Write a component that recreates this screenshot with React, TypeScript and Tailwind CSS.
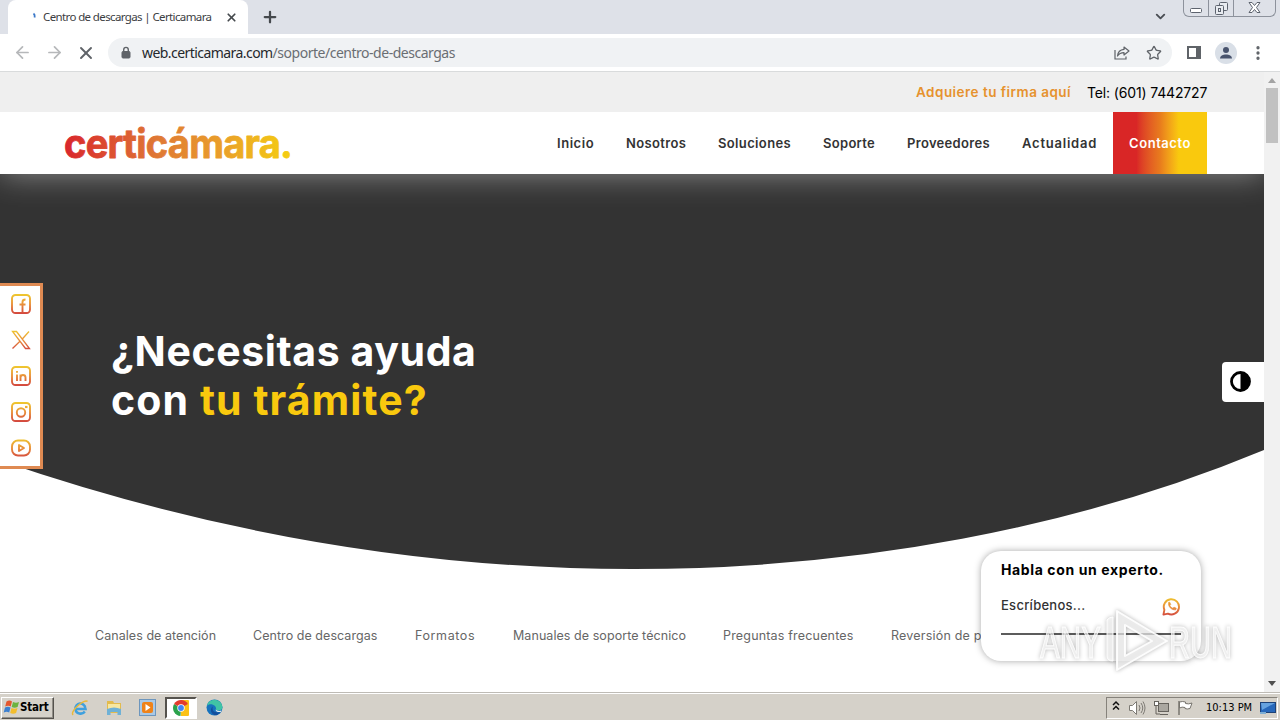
import type { ReactNode } from 'react';
import {
  ArrowLeft,
  ArrowRight,
  ChevronDown,
  EllipsisVertical,
  Plus,
  Star,
  X,
} from 'lucide-react';

const navItems = [
  { label: 'Inicio', className: 'w-[37px] tracking-[0.550px]' },
  { label: 'Nosotros', className: 'w-[60px] tracking-[0.350px]' },
  { label: 'Soluciones', className: 'w-[73px] tracking-[0.360px]' },
  { label: 'Soporte', className: 'w-[52px] tracking-[0.300px]' },
  { label: 'Proveedores', className: 'w-[83px] tracking-[0.320px]' },
  { label: 'Actualidad', className: 'w-[75px] tracking-[0.780px]' },
];

const sections = [
  { label: 'Canales de atención', className: 'w-[158px] tracking-[0.050px]' },
  { label: 'Centro de descargas', className: 'w-[162px] tracking-[0.050px]' },
  { label: 'Formatos', className: 'w-[98px] tracking-[0.600px]' },
  { label: 'Manuales de soporte técnico', className: 'w-[210px] tracking-[0.060px]' },
  { label: 'Preguntas frecuentes', className: 'w-[168px] tracking-[0.180px]' },
  { label: 'Reversión de pagos', className: 'w-[160px] tracking-[0.200px]' },
];

function WindowControls() {
  return (
    <div className="flex h-[17px] w-[93px] rounded-b-md border border-t-0 border-[#8d929c] text-[#5d636e]">
      <div className="flex w-[25px] items-center justify-center border-r border-[#8d929c]">
        <svg width="12" height="12" viewBox="0 0 12 12" fill="#fff" stroke="currentColor">
          <rect x="0.5" y="6.5" width="11" height="4" rx="1" />
        </svg>
      </div>
      <div className="flex w-[25px] items-center justify-center border-r border-[#8d929c]">
        <svg width="13" height="13" viewBox="0 0 13 13" fill="#e8ebf0" stroke="currentColor">
          <rect x="4.5" y="0.5" width="8" height="8" rx="1" />
          <rect x="0.5" y="3.5" width="8" height="9" rx="1" />
          <rect x="3.5" y="6.5" width="2" height="3" />
        </svg>
      </div>
      <div className="flex flex-1 items-center justify-center">
        <svg width="13" height="12" viewBox="0 0 13 12" fill="#fff" stroke="currentColor">
          <path d="M1 .5h3L6.500 3.500 9 .5h3L8.500 5.500l3.500 5H9L6.500 7.500 4 10.500H1l3.500-5z" />
        </svg>
      </div>
    </div>
  );
}

function TabStrip() {
  return (
    <div className="flex h-[34px] shrink-0 bg-[#dee1e8]">
      <div className="ml-2 flex h-full w-[240px] items-center rounded-t-lg bg-white pl-[23px]">
        <svg width="12" height="14" viewBox="0 0 12 14" fill="none" stroke="#3b78c8" strokeWidth="1.800">
          <path d="M2.500 3.500q1.500 1 1.200 4" />
        </svg>
        <span className="w-[184px] whitespace-nowrap text-[11.500px] tracking-[-0.620px] text-[#3c4043]">
          Centro de descargas | Certicamara
        </span>
        <X size={13} strokeWidth={3.200} className="-ml-0.5 text-[#45494d]" />
      </div>
      <Plus size={18} strokeWidth={3} className="mt-[8px] ml-[13px] text-[#45494d]" />
      <div className="flex-1" />
      <ChevronDown size={15} strokeWidth={3} className="mt-[9px] mr-[15px] text-[#4a4e54]" />
      <WindowControls />
      <div className="w-1" />
    </div>
  );
}

function ShareIcon() {
  return (
    <svg width="16" height="16" viewBox="0 0 16 16" fill="none" stroke="#5f6368" strokeWidth="1.200">
      <path d="M1 5v9h11v-2.500" />
      <path d="M10 2l5 4-5 4V7.700C7 7.700 5 8.700 3.500 11c.4-4 3-6.300 6.500-6.600z" strokeLinejoin="round" />
    </svg>
  );
}

function Toolbar() {
  return (
    <div className="flex h-[38px] shrink-0 items-center border-b border-[#d9dbdc] bg-white pl-[13px]">
      <ArrowLeft size={19} strokeWidth={2.200} className="text-[#b6b8ba]" />
      <ArrowRight size={19} strokeWidth={2.200} className="ml-[13px] text-[#b6b8ba]" />
      <X size={20} strokeWidth={2.300} className="ml-[12px] text-[#5f6368]" />
      <div className="ml-[12px] flex h-[29px] w-[1064px] items-center rounded-full bg-[#f0f2f4] pl-[11px]">
        <svg width="14" height="14" viewBox="0 0 14 14" fill="none" stroke="#5f6368">
          <rect x="3" y="5.500" width="8" height="6.500" rx="1" fill="#5f6368" />
          <path d="M4.700 5.500V3.700a2.300 2.300 0 0 1 4.600 0v1.800" strokeWidth="1.400" />
        </svg>
        <span className="ml-[9px] flex-1 whitespace-nowrap text-[14px] tracking-[-0.480px] text-[#6a6e73]">
          <span className="tracking-[-0.560px] text-[#25282c]">web.certicamara.com</span>
          /soporte/centro-de-descargas
        </span>
        <ShareIcon />
        <Star size={16} strokeWidth={1.900} className="mr-[10px] ml-[16px] text-[#5f6368]" />
      </div>
      <div className="ml-[15px] h-[13px] w-[14px] border-2 border-r-[5px] border-[#5f6368]" />
      <div className="ml-[14px] flex h-[22px] w-[22px] items-center justify-center rounded-full bg-[#d9dfe7]">
        <svg width="14" height="14" viewBox="0 0 14 14" fill="#48536d">
          <circle cx="7" cy="4" r="3" />
          <path d="M1 12.500c0-5.500 12-5.500 12 0z" />
        </svg>
      </div>
      <EllipsisVertical size={18} strokeWidth={2.400} className="ml-[12px] text-[#5f6368]" />
    </div>
  );
}

function Logo() {
  return (
    <svg width="230" height="50" viewBox="0 0 230 50" className="overflow-visible">
      <defs>
        <linearGradient id="logo" gradientUnits="userSpaceOnUse" x1="0" y1="0" x2="228" y2="0">
          <stop offset="0" stopColor="#d9262c" />
          <stop offset="0.400" stopColor="#df7735" />
          <stop offset="0.700" stopColor="#eaa02a" />
          <stop offset="1" stopColor="#f5cf10" />
        </linearGradient>
      </defs>
      <text
        x="0"
        y="39.500"
        textLength="228"
        lengthAdjust="spacingAndGlyphs"
        fill="url(#logo)"
        stroke="url(#logo)"
        strokeWidth="0.800"
        strokeLinejoin="round"
        className="font-['Inter',sans-serif] text-[40px] font-bold tracking-[-0.800px]"
      >
        certicámara.
      </text>
    </svg>
  );
}

function SiteHeader() {
  return (
    <header className="relative z-10 shrink-0 shadow-[0_0_30px_rgba(255,255,255,0.450)]">
      <div className="flex h-[40px] items-center justify-end bg-[#efefef] pr-[57px] text-[14px]">
        <span className="w-[171px] whitespace-nowrap text-[13.500px] font-semibold tracking-[0.470px] text-[#e6922e]">
          Adquiere tu firma aquí
        </span>
        <span className="w-[120px] whitespace-nowrap tracking-[-0.150px] text-black">Tel: (601) 7442727</span>
      </div>
      <div className="flex h-[62px] items-center bg-white pl-[64px]">
        <Logo />
        <nav className="ml-[263px] flex h-full items-center gap-8 text-[13px] font-semibold text-[#333]">
          {navItems.map((item) => (
            <a key={item.label} className={`${item.className} pt-0.5 whitespace-nowrap`}>
              {item.label}
            </a>
          ))}
          <a className="-ml-4 flex h-full w-[94px] items-center justify-center bg-linear-to-r from-[#d92626] from-25% via-[#e87b1d] via-50% to-[#f9c90e] to-70% pt-0.5 tracking-[0.550px] text-white">
            Contacto
          </a>
        </nav>
      </div>
    </header>
  );
}

function Hero() {
  return (
    <section className="relative h-[402px] shrink-0">
      <svg className="absolute inset-0" width="1264" height="402" viewBox="0 0 1264 402">
        <path d="M0 0H1264V276A1135 708 0 0 1 632 395Q316 395 0 286.500Z" fill="#333" />
      </svg>
      <h1 className="relative pt-[153px] pl-[111px] text-[41px] leading-[49px] font-bold tracking-[0.600px] text-white">
        ¿Necesitas ayuda
        <br />
        <span className="tracking-[1.100px]">
          con <span className="text-[#f9c90e]">tu trámite?</span>
        </span>
      </h1>
    </section>
  );
}

function SocialIcon({ children }: { children: ReactNode }) {
  return (
    <svg width="20" height="20" viewBox="0 0 20 20" fill="none" stroke="url(#social)" strokeWidth="1.900">
      {children}
    </svg>
  );
}

function SocialBar() {
  return (
    <div className="absolute top-[211px] left-0 flex h-[186px] w-[43px] flex-col items-center gap-4 border-3 border-l-0 border-[#df8a52] bg-white pt-[8px] pl-px">
      <svg width="0" height="0" className="absolute">
        <linearGradient id="social" gradientUnits="userSpaceOnUse" x1="0" y1="0" x2="0" y2="20">
          <stop offset="0" stopColor="#efc92f" />
          <stop offset="0.500" stopColor="#e9913a" />
          <stop offset="1" stopColor="#d2453f" />
        </linearGradient>
      </svg>
      <SocialIcon>
        <rect x="1" y="1" width="18" height="18" rx="3.500" />
        <path d="M11.500 19V8q0-2.500 3-2.500M8.500 10.500H14.500" />
      </SocialIcon>
      <SocialIcon>
        <path d="M1.500 1.500h4L18.500 18.500h-4zM18 1.500L11.300 9M8.700 11.500L1.500 18.500" strokeWidth="1.300" />
      </SocialIcon>
      <SocialIcon>
        <rect x="1" y="1" width="18" height="18" rx="3.500" />
        <path d="M6 8.500V15M6 5v1.800M9.500 15V8.500M9.500 11.500q0-2.500 2.500-2.500t2.500 2.500V15" />
      </SocialIcon>
      <SocialIcon>
        <rect x="1" y="1" width="18" height="18" rx="3.500" />
        <circle cx="10" cy="10.500" r="4.200" />
        <path d="M14 5h2.500" strokeWidth="2.200" />
      </SocialIcon>
      <SocialIcon>
        <rect x="1" y="2.500" width="18" height="15" rx="6" />
        <path d="M8 7v6l5-3z" strokeLinejoin="round" />
      </SocialIcon>
    </div>
  );
}

function ExpertCard() {
  return (
    <div className="absolute top-[479px] left-[981px] h-[110px] w-[220px] rounded-[20px] bg-white px-5 pt-[9px] shadow-[0_0_7px_rgba(0,0,0,0.350)]">
      <p className="whitespace-nowrap text-[14px] leading-5 font-bold tracking-[0.620px] text-black">
        Habla con un experto.
      </p>
      <div className="mt-[15px] flex h-[30px] items-start justify-between">
        <span className="text-[13px] leading-[21px] font-medium tracking-[0.270px] text-[#333]">Escríbenos...</span>
        <svg width="19" height="19" viewBox="0 0 20 20" fill="none" stroke="url(#social)" strokeWidth="2" className="mt-[2px]">
          <path d="M1.500 18.500l1-5a8 8 0 1 1 3.700 4z" strokeLinejoin="round" />
          <path d="M7 5.500c-1 4.500 3 8.500 7.500 8l.5-1.700-2.300-1-1.300 1C9.800 11.200 8.800 10.300 8.300 9l.9-1-1-2.500z" fill="#e9913a" strokeWidth="0.700" />
        </svg>
      </div>
      <div className="mt-[8px] h-[2px] bg-[#5c5c5c]" />
    </div>
  );
}

function Watermark() {
  return (
    <svg
      className="absolute top-[534px] left-[1034px] overflow-visible drop-shadow-[0_0_2px_rgba(0,0,0,0.350)]"
      width="210"
      height="72"
      viewBox="0 0 210 72"
      fill="#fff"
      fillOpacity="0.650"
      stroke="#fff"
      strokeOpacity="0.900"
    >
      <text x="6" y="52" textLength="61" lengthAdjust="spacingAndGlyphs" className="font-['Liberation_Sans',sans-serif] text-[44px]">
        ANY
      </text>
      <text x="135" y="52" textLength="63" lengthAdjust="spacingAndGlyphs" className="font-['Liberation_Sans',sans-serif] text-[44px]">
        RUN
      </text>
      <path d="M83 5L133 35 83 64ZM91 19V50L118 35Z" fillRule="evenodd" strokeLinejoin="round" strokeWidth="2" />
      <path d="M73 14q2-3 6-3V55q-6 0-6-5z" />
    </svg>
  );
}

function Scrollbar() {
  return (
    <div className="flex w-4 shrink-0 flex-col items-center bg-[#f1f1f1]">
      <div className="mt-[6px] h-0 w-0 border-x-4 border-b-[5px] border-x-transparent border-b-[#a3a3a3]" />
      <div className="mt-[5px] h-[55px] w-[12px] bg-[#c1c1c1]" />
      <div className="flex-1" />
      <div className="mb-[6px] h-0 w-0 border-x-4 border-t-[5px] border-x-transparent border-t-[#505050]" />
    </div>
  );
}

function WebPage() {
  return (
    <div className="flex h-[620px] shrink-0">
      <main className="relative flex w-[1264px] flex-col overflow-hidden bg-white font-['Inter',sans-serif]">
        <SiteHeader />
        <Hero />
        <div className="mt-[50px] ml-[95px] flex text-[12.500px] leading-5 text-[#666]">
          {sections.map((section) => (
            <a key={section.label} className={`${section.className} shrink-0 whitespace-nowrap`}>
              {section.label}
            </a>
          ))}
        </div>
        <SocialBar />
        <div className="absolute top-[290px] right-0 flex h-[40px] w-[42px] items-center rounded-l-[4px] bg-white pb-0.5 pl-[8px]">
          <svg width="21" height="21" viewBox="0 0 21 21">
            <circle cx="10.500" cy="10.500" r="9" fill="#fff" stroke="#000" strokeWidth="2.800" />
            <path d="M10.500 1a9.500 9.500 0 0 1 0 19z" />
          </svg>
        </div>
        <ExpertCard />
        <Watermark />
      </main>
      <Scrollbar />
    </div>
  );
}

function WindowsFlag() {
  return (
    <svg width="17" height="17" viewBox="0 0 17 17">
      <path d="M3.500 2.500q3-1.800 5.500 0L7.700 7.500q-2.500-1.600-5.500 0z" fill="#e4572e" />
      <path d="M10 3q3 1.600 6 0l-1.400 5q-3 1.500-5.900 0z" fill="#6db33f" />
      <path d="M2 8.500q3-1.700 5.500 0L6.200 13.500q-2.500-1.600-5.500 0z" fill="#3c80d0" />
      <path d="M8.500 9q3 1.600 6 0l-1.400 5q-3 1.500-5.900 0z" fill="#f3bd2c" />
    </svg>
  );
}

function QuickLaunch() {
  return (
    <div className="flex items-center">
      <svg width="18" height="18" viewBox="0 0 18 18" fill="none" className="ml-[17px]">
        <path d="M14.500 10H4.500a4.800 4.800 0 0 1 9.800-1zM4.500 10c0 5 7 6 9.300 2.500" stroke="#3fa0de" strokeWidth="2.500" />
        <path d="M2 16C-1 12 14-1 16.500 2.500" stroke="#e9b93a" strokeWidth="1.500" />
      </svg>
      <svg width="18" height="18" viewBox="0 0 18 18" className="ml-[16px]">
        <path d="M2 2h6l1 2h7v10H2z" fill="#e3bb4d" />
        <path d="M3 5h12v5H3z" fill="#f8e7a0" />
        <path d="M2 16v-6q7-3 14 0v6h-3.500v-3h-7v3z" fill="#6fb1d6" />
      </svg>
      <svg width="17" height="17" viewBox="0 0 17 17" className="ml-[16px]">
        <rect x="0.500" y="0.500" width="16" height="16" fill="#a9c9e6" stroke="#6d96bd" />
        <rect x="3" y="3" width="11" height="11" rx="2" fill="#ef8319" />
        <path d="M6.500 5v7l5-3.500z" fill="#fff" />
      </svg>
      <div className="ml-[9px] flex h-[22px] w-[32px] items-center justify-center border-2 border-[#fff] border-t-[#55524d] border-l-[#55524d] bg-white">
        <svg width="16" height="16" viewBox="0 0 16 16">
          <path d="M8 8V0h6.900A8 8 0 0 1 8 16z" fill="#fbc116" />
          <path d="M8 8l-.5 8A8 8 0 0 1 1.100 4z" fill="#2ba24c" />
          <path d="M1.100 4A8 8 0 0 1 14.900 4L8 8z" fill="#e33b2e" />
          <circle cx="8" cy="8" r="3.700" fill="#fff" />
          <circle cx="8" cy="8" r="2.900" fill="#4285f4" />
        </svg>
      </div>
      <svg width="17" height="17" viewBox="0 0 17 17" className="ml-[9px]">
        <circle cx="8.500" cy="8.500" r="8" fill="#1672bd" />
        <path d="M.7 7A8 8 0 0 1 16.500 8c0 4-5 4-6.500 2.500C11 6 4 3 .7 7z" fill="#40c4a5" />
        <path d="M7 7.500c-2 4 2 7 7.500 5.500-1 1-2 2-4 3.300C5 16 3 10 7 7.500z" fill="#134e9c" />
        <path d="M9.500 10.500c1.500 1.500 4 1.700 6 1l-.8 1.500c-3 .5-5-.7-5.200-2.500z" fill="#e8eef0" />
      </svg>
    </div>
  );
}

function Tray() {
  return (
    <div className="mr-[2px] flex h-[22px] w-[172px] items-center border border-[#fff] border-t-[#86827b] border-l-[#86827b] pl-[5px]">
      <svg width="8" height="12" viewBox="0 0 8 12" fill="none" stroke="#111" strokeWidth="1.500" className="mb-[3px]">
        <path d="M1 5l3-3 3 3M1 9.500l3-3 3 3" />
      </svg>
      <svg width="17" height="16" viewBox="0 0 17 16" fill="#fff" stroke="#7d7a74" className="ml-[9px]">
        <path d="M.5 5.500h3l4-4v13l-4-4h-3z" />
        <path d="M10 5q2 3 0 6M12 3q3.500 5 0 10M14 1.500q4 6.500 0 13" fill="none" />
      </svg>
      <svg width="17" height="16" viewBox="0 0 17 16" fill="#fff" stroke="#66635d" className="ml-[7px]">
        <rect x="5.500" y="3.500" width="10" height="8" fill="#aaa7a0" />
        <path d="M7 14.500h8M3 5v9h4" fill="none" />
        <rect x="1.500" y="1.500" width="4" height="4" />
      </svg>
      <svg width="17" height="16" viewBox="0 0 17 16" fill="#fff" stroke="#77746e" className="ml-[7px]">
        <path d="M2 1v14" strokeWidth="1.500" />
        <path d="M2.500 2q3-1 6 0v1.500q3 1 6.500-.5l-2 5.500q-3 1-5 0V7.500q-3-1-5.500.5z" />
      </svg>
      <span className="ml-[12px] w-[54px] pt-px whitespace-nowrap font-['DejaVu_Sans_Condensed','DejaVu_Sans',sans-serif] text-[11px] text-black">
        10:13 PM
      </span>
      <svg width="16" height="14" viewBox="0 0 16 14">
        <rect x="0.500" y="1.500" width="15" height="10" fill="#2868ba" stroke="#1e4277" />
        <path d="M1 2h14L2 9z" fill="#67a3df" />
        <rect y="11" width="6" height="2" fill="#7eaed4" />
      </svg>
    </div>
  );
}

function Taskbar() {
  return (
    <footer className="flex h-[28px] shrink-0 items-center border-t border-[#bebbb5] bg-[#d5d1c9] pt-0.5 shadow-[inset_0_1px_0_#fff]">
      <div className="ml-px flex h-[22px] w-[53px] items-center border border-[#55524d] border-t-white border-l-white pl-px shadow-[inset_-1px_-1px_0_#918e87]">
        <WindowsFlag />
        <span className="font-['DejaVu_Sans_Condensed','DejaVu_Sans',sans-serif] text-[11.500px] font-bold tracking-[-0.200px] text-black">
          Start
        </span>
      </div>
      <QuickLaunch />
      <div className="flex-1" />
      <Tray />
    </footer>
  );
}

export default function App() {
  return (
    <div className="flex h-[720px] w-[1280px] flex-col overflow-hidden bg-white font-['Noto_Sans',sans-serif]">
      <TabStrip />
      <Toolbar />
      <WebPage />
      <Taskbar />
    </div>
  );
}
